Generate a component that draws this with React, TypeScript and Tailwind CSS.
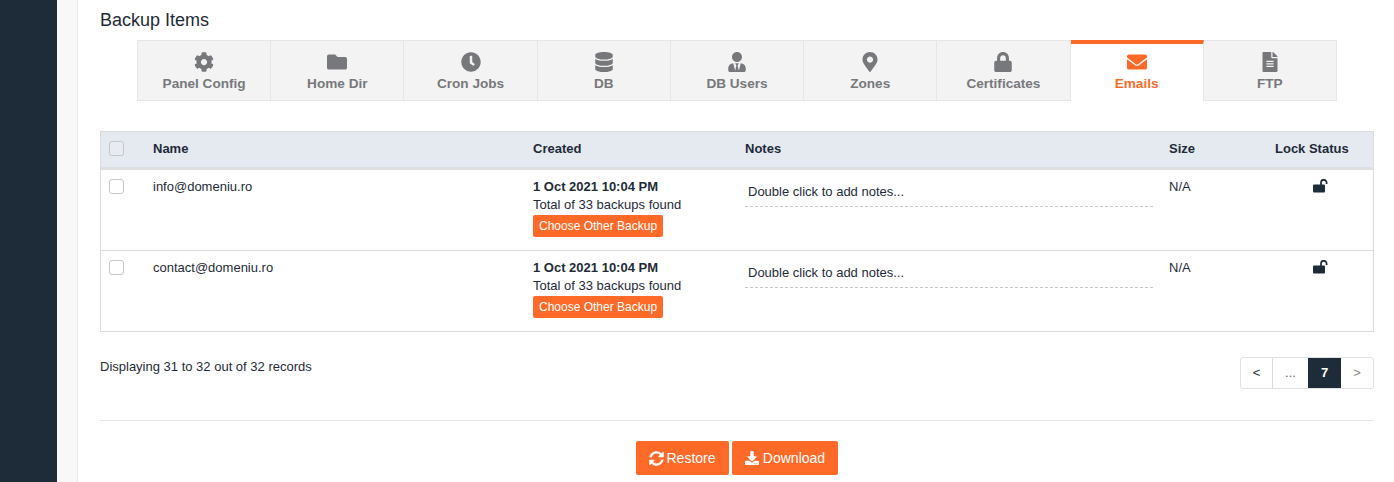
import React from "react";
import { FaCog, FaFolder, FaClock, FaDatabase, FaUserTie, FaMapMarkerAlt, FaLock, FaEnvelope, FaFileAlt, FaSyncAlt, FaDownload } from "react-icons/fa";

const tabs = [
  { label: "Panel Config", Icon: FaCog },
  { label: "Home Dir", Icon: FaFolder },
  { label: "Cron Jobs", Icon: FaClock },
  { label: "DB", Icon: FaDatabase },
  { label: "DB Users", Icon: FaUserTie },
  { label: "Zones", Icon: FaMapMarkerAlt },
  { label: "Certificates", Icon: FaLock },
  { label: "Emails", Icon: FaEnvelope, active: true },
  { label: "FTP", Icon: FaFileAlt },
];

const rows = ["info@domeniu.ro", "contact@domeniu.ro"];
const cols = "grid grid-cols-[44px_380px_212px_424px_106px_1fr]";

function Check() {
  return <span className="block w-[15px] h-[15px] rounded-[3px] border border-[#c4c6c9] bg-white/10" />;
}

function UnlockIcon() {
  return (
    <svg viewBox="0 0 15 14" className="w-[15px] h-[14px]" aria-hidden="true">
      <rect x="0" y="5.5" width="12" height="8" rx="1" fill="currentColor" />
      <path d="M8 6V3.6a2.8 2.8 0 0 1 5.6 0V5" fill="none" stroke="currentColor" strokeWidth="1.7" />
    </svg>
  );
}

export default function App() {
  return (
    <div className="flex h-[482px] overflow-hidden bg-white font-['Liberation_Sans',Arial,sans-serif] text-[#1e2b38]">
      <div className="w-[57px] shrink-0 bg-[#1e2b38]" />
      <div className="w-[21px] shrink-0 bg-[#f8f8f8] border-r border-[#e9e9e9]" />
      <main className="flex-1 min-w-0 pl-[22px] pr-[20px] flex flex-col">
        <h2 className="text-[18px] leading-[20px] mt-[10px] font-normal">Backup Items</h2>
        <div className="mt-[10px] ml-[37px] mr-[37px] flex h-[61px] border border-[#e6e6e6] border-r-0 bg-[#f3f3f3]">
          {tabs.map(({ label, Icon, active }) => (
            <div
              key={label}
              className={
                active
                  ? "flex-1 flex flex-col items-center bg-white text-[#ff6a28] border-r border-[#e6e6e6] border-t-[4px] border-t-[#ff6a28] -mt-px -mb-px pt-[8px]"
                  : "flex-1 flex flex-col items-center text-[#77787b] border-r border-[#e6e6e6] pt-[11px]"
              }
            >
              <Icon className="w-[20px] h-[20px]" />
              <span className="text-[13.6px] leading-[15px] mt-[4px] font-bold">{label}</span>
            </div>
          ))}
        </div>
        <div className="mt-[30px] border border-[#dcdcdc] text-[13px]">
          <div className={`${cols} h-[38px] items-center bg-[#e5e9f0] border-b-[3px] border-[#dfe0e2] font-bold pb-[2px]`}>
            <div className="pl-2"><Check /></div>
            <div className="px-2">Name</div>
            <div className="px-2">Created</div>
            <div className="px-2">Notes</div>
            <div className="px-2">Size</div>
            <div className="px-2">Lock Status</div>
          </div>
          {rows.map((r, i) => (
            <div key={r} className={i === 0 ? `${cols} h-[81px] border-b border-[#dcdcdc]` : `${cols} h-[80px]`}>
              <div className="pl-2 pt-[9px]"><Check /></div>
              <div className="px-2 pt-[9px] leading-[15px]">{r}</div>
              <div className="px-2 pt-[8px] leading-[18px]">
                <div className="font-bold">1 Oct 2021 10:04 PM</div>
                <div>Total of 33 backups found</div>
                <button className="mt-[1px] block h-[22px] px-[6px] rounded-[2px] bg-[#ff6a28] text-white text-[12px] leading-[22px]">Choose Other Backup</button>
              </div>
              <div className="px-2 pt-[13px]">
                <div className="h-[24px] pl-[3px] leading-[17px] border-b border-dashed border-[#c9c9c9]">Double click to add notes...</div>
              </div>
              <div className="px-2 pt-[9px] leading-[15px]">N/A</div>
              <div className="pt-[9px] flex justify-center"><UnlockIcon /></div>
            </div>
          ))}
        </div>
        <div className="mt-[25px] flex justify-between items-start text-[13px]">
          <div className="leading-[20px]">Displaying 31 to 32 out of 32 records</div>
          <div className="flex w-[134px] h-[32px] border border-[#e2e2e2] rounded-[3px] overflow-hidden">
            <div className="w-[32px] flex items-center justify-center border-r border-[#dcdcdc]">&lt;</div>
            <div className="w-[35px] flex items-center justify-center text-[#666]">...</div>
            <div className="w-[33px] flex items-center justify-center bg-[#1e2b38] text-white font-bold">7</div>
            <div className="flex-1 flex items-center justify-center text-[#888]">&gt;</div>
          </div>
        </div>
        <hr className="mt-[31px] border-t border-[#e6e6e6]" />
        <div className="mt-[20px] flex justify-center gap-[3px]">
          <button className="h-[34px] w-[93px] flex items-center justify-center gap-[2px] rounded-[2px] bg-[#ff6a28] text-white text-[14px]"><FaSyncAlt className="w-[15px] h-[15px]" />Restore</button>
          <button className="h-[34px] w-[106px] flex items-center justify-center gap-[4px] rounded-[2px] bg-[#ff6a28] text-white text-[14px]"><FaDownload className="w-[14px] h-[14px]" />Download</button>
        </div>
      </main>
    </div>
  );
}
